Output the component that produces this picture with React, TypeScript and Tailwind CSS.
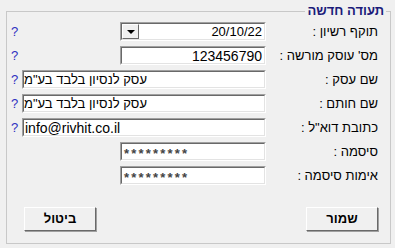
import React from "react";

type Row = {
  label: string;
  value: string;
  help?: boolean;
  wide?: boolean;
  kind?: "date" | "number" | "heb" | "email" | "password";
};

const rows: Row[] = [
  { label: "תוקף רשיון :", value: "20/10/22", help: true, kind: "date" },
  { label: "מס' עוסק מורשה :", value: "123456790", help: true, kind: "number" },
  { label: "שם עסק :", value: 'עסק לנסיון בלבד בע"מ', help: true, wide: true, kind: "heb" },
  { label: "שם חותם :", value: 'עסק לנסיון בלבד בע"מ', help: true, wide: true, kind: "heb" },
  { label: 'כתובת דוא"ל :', value: "info@rivhit.co.il", help: true, wide: true, kind: "email" },
  { label: "סיסמה :", value: "*********", kind: "password" },
  { label: "אימות סיסמה :", value: "*********", kind: "password" },
];

function valueClass(kind: Row["kind"]) {
  if (kind === "password") return "text-[13px] leading-none text-[#444] tracking-[2.2px] font-bold pt-[4px]";
  if (kind === "number" || kind === "email") return "text-[14px] leading-none text-black";
  return "text-[13px] leading-none text-black";
}

function Field({ row }: { row: Row }) {
  const align =
    row.kind === "email" || row.kind === "password" ? "justify-start" : "justify-end";
  return (
    <div
      className={`h-[19px] border-t border-l border-t-[#a0a0a0] border-l-[#a0a0a0] border-b border-r border-b-white border-r-white ${
        row.wide ? "w-[244px]" : "w-[146px]"
      }`}
    >
      <div className="h-full border-t border-l border-t-[#696969] border-l-[#696969] border-b border-r border-b-[#e3e3e3] border-r-[#e3e3e3] bg-white flex items-center">
        {row.kind === "date" && (
          <div className="w-[17px] h-full bg-[#f0f0f0] border-r border-b border-r-[#696969] border-b-[#696969] border-t border-l border-t-white border-l-white flex items-center justify-center">
            <span className="block w-0 h-0 border-l-[4px] border-r-[4px] border-t-[4px] border-l-transparent border-r-transparent border-t-black" />
          </div>
        )}
        <div
          className={`flex-1 flex ${align} ${
            row.kind === "email" ? "pl-[1px]" : row.kind === "password" ? "pl-[2px]" : "pr-[2px]"
          }`}
          dir={row.kind === "heb" ? "rtl" : "ltr"}
        >
          <span className={valueClass(row.kind)}>{row.value}</span>
        </div>
      </div>
    </div>
  );
}

function Button({ children }: { children: React.ReactNode }) {
  return (
    <button className="w-[72px] h-[24px] bg-[#f0f0f0] border border-t-white border-l-white border-b-[#696969] border-r-[#696969] shadow-[1px_1px_0_#a0a0a0] text-[13px] font-bold text-black flex items-center justify-center">
      <span dir="rtl">{children}</span>
    </button>
  );
}

export default function App() {
  return (
    <div
      className="w-[395px] h-[248px] bg-[#f0f0f0] pl-[6px] pt-[3px]"
      style={{ fontFamily: '"Liberation Sans", "DejaVu Sans", sans-serif' }}
    >
      <fieldset className="w-[385px] h-[241px] border border-[#c8c8c8]">
        <legend className="ml-auto mr-[4px] px-[2px] text-[13px] leading-[16px] font-bold text-[#1b1b7a]" dir="rtl">
          תעודה חדשה
        </legend>
        <div className="pt-[3px] flex flex-col gap-[5px]">
          {rows.map((row) => (
            <div key={row.label} className="flex items-center h-[19px]">
              <div className="w-[15px] text-center text-[13px] leading-none text-[#3030c0]">
                {row.help ? "?" : ""}
              </div>
              <div className="w-[244px] flex justify-end">
                <Field row={row} />
              </div>
              <div className="w-[112px] text-right text-[13px] leading-none text-black" dir="rtl">
                {row.label}
              </div>
            </div>
          ))}
        </div>
        <div className="flex justify-between pl-[17px] pr-[12px] mt-[22px]">
          <Button>ביטול</Button>
          <Button>שמור</Button>
        </div>
      </fieldset>
    </div>
  );
}
